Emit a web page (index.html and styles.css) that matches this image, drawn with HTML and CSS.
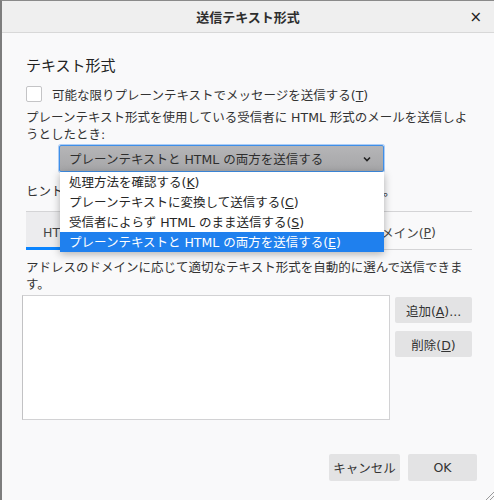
FILE: index.html
```html
<!DOCTYPE html>
<html lang="ja">
<head>
<meta charset="utf-8">
<title>送信テキスト形式</title>
<link rel="stylesheet" href="styles.css">
</head>
<body>
<div class="window">
  <header class="titlebar">
    <span></span>
    <span class="title">送信テキスト形式</span>
    <span class="close">×</span>
  </header>
  <main class="content">
    <h1 class="heading">テキスト形式</h1>
    <label class="check-row">
      <span class="checkbox"></span>
      <span>可能な限りプレーンテキストでメッセージを送信する(<u>T</u>)</span>
    </label>
    <p class="para">プレーンテキスト形式を使用している受信者に HTML 形式のメールを送信しようとしたとき:</p>
    <div class="select-wrap">
      <div class="select">
        <span>プレーンテキストと HTML の両方を送信する</span>
        <svg class="chev" width="8" height="6" viewBox="0 0 8 6"><path d="M1 1.5 L4 4.5 L7 1.5" fill="none" stroke="#222" stroke-width="1.6"/></svg>
      </div>
      <ul class="popup">
        <li>処理方法を確認する(<u>K</u>)</li>
        <li>プレーンテキストに変換して送信する(<u>C</u>)</li>
        <li>受信者によらず HTML のまま送信する(<u>S</u>)</li>
        <li class="sel">プレーンテキストと HTML の両方を送信する(<u>E</u>)</li>
      </ul>
    </div>
    <p class="hint">ヒント: 特定のドメイン宛てのメールは以下の設定で送信します。</p>
    <div class="tabs">
      <div class="tab tab-first">HTML ドメイン(<u>H</u>)</div>
      <div class="tab tab-second">プレーンテキストドメイン(<u>P</u>)</div>
    </div>
    <p class="desc">アドレスのドメインに応じて適切なテキスト形式を自動的に選んで送信できます。</p>
    <div class="list-row">
      <div class="listbox"></div>
      <div class="side-buttons">
        <button class="btn side">追加(<u>A</u>)...</button>
        <button class="btn side">削除(<u>D</u>)</button>
      </div>
    </div>
  </main>
  <footer class="footer">
    <button class="btn foot cancel">キャンセル</button>
    <button class="btn foot ok">OK</button>
  </footer>
  <svg class="resizer" width="10" height="10" viewBox="0 0 10 10"><path d="M10 2 L2 10 M10 6 L6 10" stroke="#9a9a9a" stroke-width="1"/></svg>
</div>
</body>
</html>
```

FILE: styles.css
```css
* { box-sizing: border-box; }
html, body { margin: 0; padding: 0; }
body {
  width: 494px;
  height: 500px;
  overflow: hidden;
  font-family: "DejaVu Sans", "Noto Sans CJK JP", sans-serif;
  font-size: 12.5px;
  color: #333;
  background: #f9f9fa;
}
.window {
  position: relative;
  width: 494px;
  height: 500px;
  display: flex;
  flex-direction: column;
  border-left: 2px solid #7d7d7d;
  border-top: 1px solid #8a8a8a;
  background: #f9f9fa;
}
.titlebar {
  height: 32px;
  flex: none;
  display: grid;
  grid-template-columns: 1fr auto 1fr;
  align-items: center;
  background: #efefef;
  border-bottom: 1px solid #d8d8d8;
}
.title {
  font-size: 13px;
  font-weight: bold;
  color: #2e2e2e;
}
.close {
  justify-self: end;
  padding-right: 12px;
  font-size: 15px;
  color: #222;
}
.content {
  padding: 0 22px 0 24px;
  flex: none;
}
.heading {
  margin: 23px 0 0;
  font-size: 15px;
  font-weight: normal;
  line-height: 20px;
  color: #222;
}
.check-row {
  display: flex;
  align-items: center;
  gap: 10px;
  height: 20px;
  margin-top: 8px;
}
.checkbox {
  width: 16px;
  height: 16px;
  background: #fff;
  border: 1px solid #c4c4c6;
  border-radius: 2px;
}
u { text-decoration: underline; text-underline-offset: 1px; }
.para {
  margin: 6px 0 0;
  line-height: 16.5px;
}
.select-wrap {
  position: relative;
  margin: 2px 0 0 33px;
  width: 325px;
  z-index: 2;
}
.select {
  height: 27px;
  display: flex;
  align-items: center;
  justify-content: space-between;
  padding: 0 12px 0 9px;
  background: linear-gradient(#b5b5b7, #a6a6a8);
  border: 1px solid #3f8fe8;
  box-shadow: 0 0 0 1px rgba(80, 150, 240, 0.45);
  border-radius: 2px;
  color: #2e2e2e;
}
.chev { margin-top: 1px; }
.popup {
  position: absolute;
  top: 27px;
  left: 1px;
  right: 0;
  margin: 0;
  padding: 0;
  list-style: none;
  background: #fff;
  box-shadow: 0 2px 8px rgba(0, 0, 0, 0.3);
}
.popup li {
  height: 20px;
  line-height: 21px;
  padding-left: 9px;
  color: #262626;
}
.popup li.sel {
  background: #1f80ee;
  color: #fff;
}
.hint {
  margin: 12px 0 0;
  line-height: 16px;
  white-space: nowrap;
}
.tabs {
  margin-top: 11px;
  display: flex;
  height: 39px;
  border-top: 1px solid #d4d4d6;
  border-bottom: 1px solid #d4d4d6;
}
.tab {
  flex: 1;
  display: flex;
  align-items: center;
  color: #444;
}
.tab-first {
  padding-left: 17px;
  background: #ececee;
  border-bottom: 3px solid #0a84ff;
  margin-bottom: -1px;
  padding-top: 4px;
}
.tab-second {
  justify-content: flex-end;
  padding-right: 36px;
  padding-top: 3px;
}
.desc {
  margin: 10px 0 0;
  line-height: 16.5px;
}
.list-row {
  display: flex;
  align-items: flex-start;
  gap: 5px;
  margin-top: 2px;
  margin-left: -4px;
}
.listbox {
  width: 368px;
  height: 125px;
  background: #fff;
  border: 1px solid #d2d2d4;
  border-left-color: #c2c2c4;
}
.side-buttons {
  display: flex;
  flex-direction: column;
  gap: 8px;
  margin-top: 2px;
}
.btn {
  font-family: inherit;
  font-size: 12.5px;
  color: #333;
  background: #e3e3e4;
  border: none;
  border-radius: 2px;
  height: 26px;
  padding: 0;
}
.side { width: 77px; }
.footer {
  margin-top: auto;
  display: flex;
  justify-content: flex-end;
  gap: 8px;
  padding: 0 17px 19px 0;
}
.foot { height: 27px; }
.cancel { width: 71px; }
.ok { width: 69px; }
.resizer {
  position: absolute;
  right: 0;
  bottom: 0;
}
```
